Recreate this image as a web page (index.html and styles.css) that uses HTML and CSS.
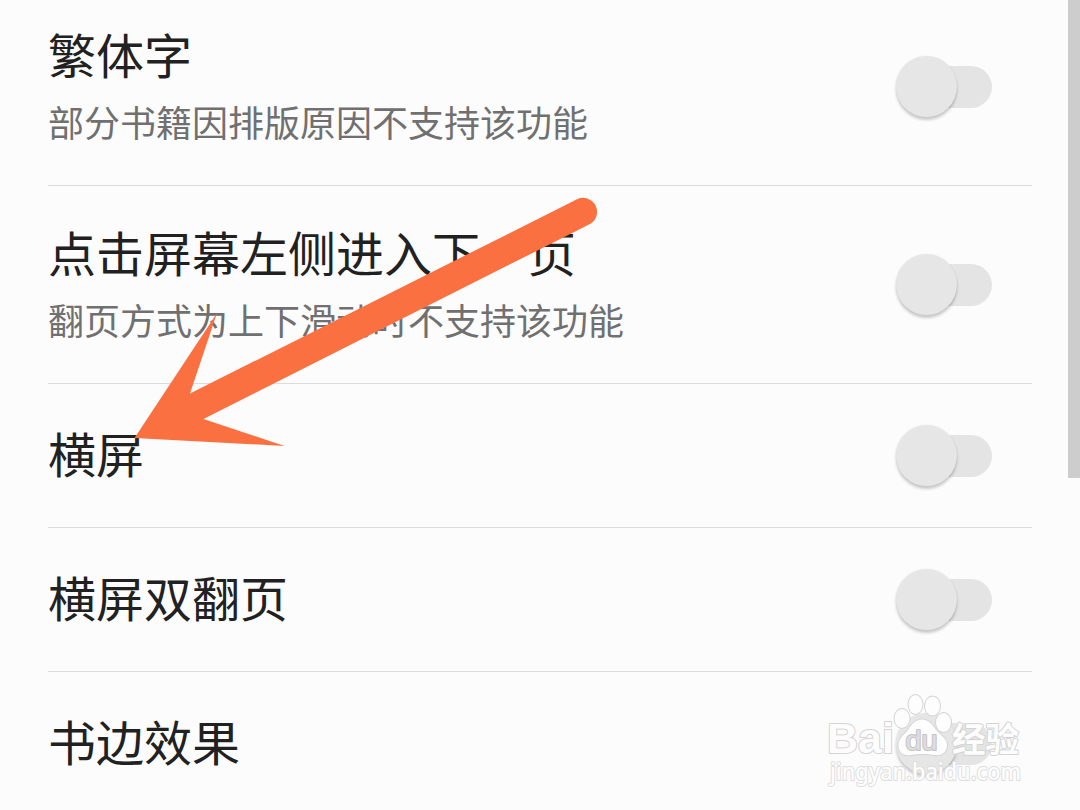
FILE: index.html
```
<!DOCTYPE html>
<html lang="zh-CN">
<head>
  <meta charset="UTF-8">
  <meta name="viewport" content="width=device-width, initial-scale=1.0">
  <title>阅读设置</title>
  <link rel="stylesheet" href="styles.css">
</head>
<body>
  <div class="screen">
    <ul class="settings">
      <li class="settings__item settings__item--tall">
        <div class="settings__text">
          <p class="settings__title">繁体字</p>
          <p class="settings__desc">部分书籍因排版原因不支持该功能</p>
        </div>
        <div class="switch"><span class="switch__knob"></span></div>
      </li>
      <li class="settings__item settings__item--tall">
        <div class="settings__text">
          <p class="settings__title">点击屏幕左侧进入下一页</p>
          <p class="settings__desc">翻页方式为上下滑动时不支持该功能</p>
        </div>
        <div class="switch"><span class="switch__knob"></span></div>
      </li>
      <li class="settings__item">
        <div class="settings__text">
          <p class="settings__title">横屏</p>
        </div>
        <div class="switch"><span class="switch__knob"></span></div>
      </li>
      <li class="settings__item">
        <div class="settings__text">
          <p class="settings__title">横屏双翻页</p>
        </div>
        <div class="switch"><span class="switch__knob"></span></div>
      </li>
      <li class="settings__item">
        <div class="settings__text">
          <p class="settings__title">书边效果</p>
        </div>
        <div class="switch"><span class="switch__knob"></span></div>
      </li>
    </ul>

    <div class="scrollbar"></div>

    <!-- Arrow -->
    <svg class="arrow" viewBox="0 0 480 260">
      <path d="M14.500 248 L97 123 L70 203.500 L457.500 9 A14 14 0 0 1 470 34 L83.500 229 L164.500 256 Z"/>
    </svg>

    <!-- Watermark -->
    <svg class="watermark" viewBox="820 690 210 120">
      <text class="watermark__brand" x="827" y="753" textLength="67" lengthAdjust="spacingAndGlyphs">Bai</text>
      <g class="watermark__paw">
        <ellipse cx="902" cy="718.500" rx="7.500" ry="9.500"/>
        <ellipse cx="915.500" cy="704.500" rx="7" ry="9.500"/>
        <ellipse cx="932.500" cy="706" rx="7.500" ry="9.500"/>
        <ellipse cx="943.500" cy="722.500" rx="7.500" ry="9.500"/>
        <path d="M922 719.500 C929 719.500 933 725 936 730 C940 735 947 738 947 745 C947 752 942 756 935 755 C926 753.500 919 753.500 911 755 C903 756.500 898.500 752 898.500 745 C898.500 738 904 735 908 730 C911 725 915 719.500 922 719.500 Z"/>
      </g>
      <text class="watermark__du" x="905.500" y="750" textLength="32" lengthAdjust="spacingAndGlyphs">du</text>
      <text class="watermark__cn" x="952" y="752" textLength="67" lengthAdjust="spacingAndGlyphs">经验</text>
      <text class="watermark__url" x="830" y="780" textLength="191" lengthAdjust="spacingAndGlyphs">jingyan.baidu.com</text>
    </svg>
  </div>
</body>
</html>
```
FILE: styles.css
```
/* Reset */
*, *::after, *::before {
  margin: 0;
  padding: 0;
  box-sizing: border-box;
}

body {
  background-color: #fcfcfc;
  font-family: "Noto Sans CJK SC", sans-serif;
}

.screen {
  position: relative;
  width: 1080px;
  height: 810px;
  overflow: hidden;
}

/* Settings list, the first row is partly scrolled out */
.settings {
  list-style: none;
  margin-top: -12px;
  padding: 0 48px;
}

.settings__item {
  display: flex;
  align-items: center;
  justify-content: space-between;
  height: 144px;
  padding-right: 40px;
  border-bottom: 1px solid #dcdcdc;
}

.settings__item--tall {
  height: 198px;
}

.settings__text {
  padding-bottom: 7px;
}

.settings__item--tall .settings__text {
  padding-bottom: 9px;
}

.settings__title {
  font-size: 48px;
  line-height: 72px;
  color: #212121;
}

.settings__desc {
  margin-top: 5px;
  font-size: 36px;
  line-height: 54px;
  color: #707070;
}

/* Switch */
.switch {
  display: flex;
  align-items: center;
  width: 84px;
  height: 42px;
  border-radius: 21px;
  background-color: #e4e4e4;
}

.switch__knob {
  flex: none;
  width: 61px;
  height: 61px;
  margin-left: -12px;
  border-radius: 50%;
  background-color: #e6e6e6;
  box-shadow: 0 3px 3px rgba(0, 0, 0, 0.2), 0 0 2px rgba(0, 0, 0, 0.06);
}

.scrollbar {
  position: absolute;
  top: 0;
  right: 0;
  width: 12px;
  height: 478px;
  background-color: #cdcdcd;
}

.arrow {
  position: absolute;
  top: 190px;
  left: 120px;
  width: 480px;
  height: 260px;
  fill: #fa7040;
}

/* Watermark */
.watermark {
  position: absolute;
  top: 690px;
  left: 820px;
  width: 210px;
  height: 120px;
  fill: #fdfdfd;
  stroke: #d4d4d4;
  stroke-width: 2px;
  stroke-linejoin: round;
  paint-order: stroke;
}

.watermark__brand {
  font: bold 43px "Liberation Sans", sans-serif;
}

.watermark__paw {
  stroke-width: 2px;
}

.watermark__du {
  font: 27px "Liberation Sans", sans-serif;
  fill: #dedede;
  stroke: #c4c4c4;
}

.watermark__cn {
  font: bold 34px "Noto Sans CJK SC", sans-serif;
}

.watermark__url {
  font: 500 23px "Noto Sans", sans-serif;
  stroke: #dedede;
}
```
